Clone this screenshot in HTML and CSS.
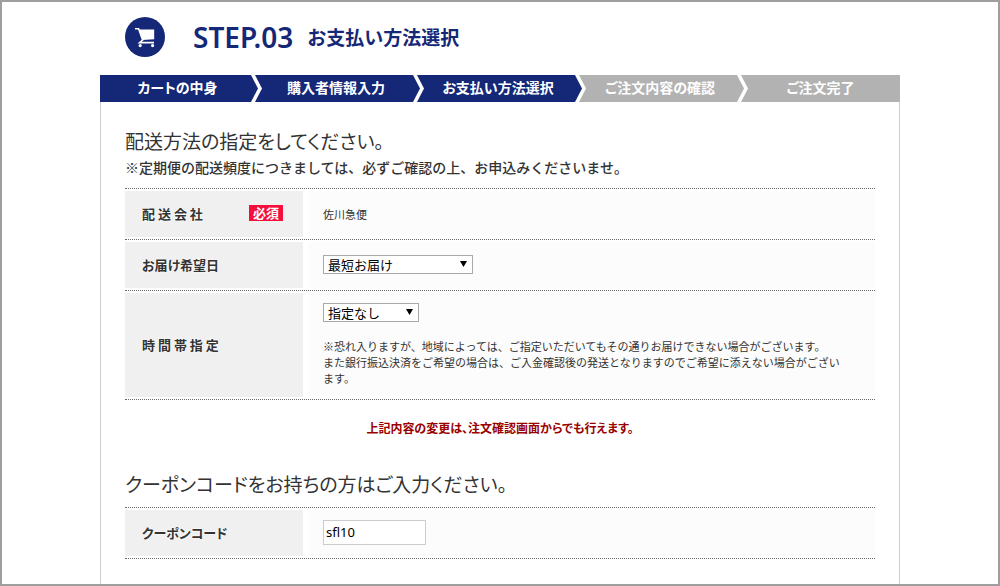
FILE: index.html
```html
<!DOCTYPE html>
<html lang="ja">
<head>
    <meta charset="UTF-8">
    <meta name="viewport" content="width=device-width, initial-scale=1.0">
    <link rel="stylesheet" href="styles.css">
    <title>お支払い方法選択</title>
</head>
<body>
    <div class="container">
        <header class="page-header">
            <svg class="cart-icon" viewBox="0 0 40 40" aria-hidden="true">
                <circle cx="20" cy="20" r="20" fill="#152777"/>
                <path d="M10 11.7h3.6l4 11.3-3 2.6H29" fill="none" stroke="#fff" stroke-width="1.6"/>
                <path d="M14 12.4H29.2V22.2L17.6 23z" fill="#fff"/>
                <circle cx="15.2" cy="28.6" r="1.6" fill="#fff"/>
                <circle cx="27.6" cy="28.6" r="1.6" fill="#fff"/>
            </svg>
            <h1><span class="step-number">STEP.03</span> <span class="step-title">お支払い方法選択</span></h1>
        </header>

        <ol class="steps">
            <li class="done">カートの中身</li>
            <li class="done">購入者情報入力</li>
            <li class="done">お支払い方法選択</li>
            <li>ご注文内容の確認</li>
            <li>ご注文完了</li>
        </ol>

        <form class="panel">
            <h2>配送方法の指定をしてください。</h2>
            <p class="lead">※定期便の配送頻度につきましては、必ずご確認の上、お申込みくださいませ。</p>
            <dl class="fields">
                <div class="field">
                    <dt>配 送 会 社 <span class="required">必須</span></dt>
                    <dd>佐川急便</dd>
                </div>
                <div class="field">
                    <dt><label for="deliveryDate">お届け希望日</label></dt>
                    <dd>
                        <div class="select-box date-box">
                            <select id="deliveryDate">
                                <option>最短お届け</option>
                            </select>
                        </div>
                    </dd>
                </div>
                <div class="field">
                    <dt><label for="deliveryTime">時 間 帯 指 定</label></dt>
                    <dd>
                        <div class="select-box time-box">
                            <select id="deliveryTime">
                                <option>指定なし</option>
                            </select>
                        </div>
                        <p class="note">※恐れ入りますが、地域によっては、ご指定いただいてもその通りお届けできない場合がございます。<br>また銀行振込決済をご希望の場合は、ご入金確認後の発送となりますのでご希望に添えない場合がございます。</p>
                    </dd>
                </div>
            </dl>
            <p class="notice">上記内容の変更は、注文確認画面からでも行えます。</p>

            <h2>クーポンコードをお持ちの方はご入力ください。</h2>
            <dl class="fields">
                <div class="field">
                    <dt><label for="couponCode">クーポンコード</label></dt>
                    <dd><input type="text" id="couponCode" class="coupon" value="sfl10"></dd>
                </div>
            </dl>
        </form>
    </div>
</body>
</html>
```

FILE: styles.css
```css
* {
    box-sizing: border-box;
}

body {
    margin: 0;
    min-height: 100vh;
    display: flex;
    border: 2px solid #9e9e9e;
    background-color: #fff;
    color: #333;
    font-family: "Noto Sans CJK JP", sans-serif;
}

.container {
    width: 100%;
    max-width: 800px;
    margin: 0 auto;
    display: flex;
    flex-direction: column;
}

h1, h2, p, dl, dd, ol {
    margin: 0;
    padding: 0;
}

.page-header {
    display: flex;
    align-items: center;
    gap: 28px;
    padding: 15px 25px 18px;
    color: #152777;
}

.cart-icon {
    width: 40px;
    height: 40px;
}

h1 {
    display: flex;
    align-items: center;
    gap: 14px;
    line-height: 40px;
}

.step-number {
    font-family: "Noto Sans", sans-serif;
    font-size: 28px;
    font-weight: 600;
}

.step-title {
    font-size: 19px;
    font-weight: 700;
}

.steps {
    display: grid;
    grid-template-columns: 155fr 162fr 162fr 162fr 159fr;
    list-style: none;
    color: #fff;
    font-size: 14px;
    font-weight: 700;
    line-height: 25px;
    text-align: center;
    font-feature-settings: "palt";
}

.steps li {
    position: relative;
    padding-bottom: 2px;
    background-color: #b2b2b2;
    white-space: nowrap;
}

.steps .done {
    background-color: #152777;
}

/* white chevron, then the step's own colour on top of it */
.steps li:not(:last-child)::before,
.steps li:not(:last-child)::after {
    content: "";
    position: absolute;
    z-index: 1;
    top: 0;
    left: calc(100% - 4px);
    width: 11px;
    height: 100%;
    background-color: #fff;
    clip-path: polygon(0 0, 4px 0, 11px 50%, 4px 100%, 0 100%);
}

.steps li:not(:last-child)::after {
    background-color: inherit;
    clip-path: polygon(0 0, 7px 50%, 0 100%);
}

.panel {
    flex: 1;
    padding: 25px 24px;
    border: solid #ccc;
    border-width: 0 1px;
}

h2 {
    margin-bottom: 1px;
    font-size: 19px;
    font-weight: 400;
    line-height: 27px;
    font-feature-settings: "palt";
}

.lead {
    margin-bottom: 9px;
    font-size: 14px;
    font-weight: 500;
    line-height: 24px;
}

.fields {
    border-bottom: 1px dotted #666;
}

.field {
    display: flex;
    gap: 5px;
    padding: 2px 0;
    border-top: 1px dotted #666;
}

dt {
    flex: none;
    width: 178px;
    min-height: 46px;
    padding: 0 20px 2px 17px;
    display: flex;
    align-items: center;
    justify-content: space-between;
    background-color: #f0f0f0;
    font-size: 13px;
    font-weight: 700;
    font-feature-settings: "palt";
    text-shadow: 0 0 2px #fff, 0 0 2px #fff;
}

dd {
    flex: 1;
    padding: 10px 26px 11px 15px;
    display: flex;
    flex-direction: column;
    justify-content: center;
    align-items: flex-start;
    background-color: #fcfcfc;
    font-size: 11px;
    line-height: 16px;
}

.required {
    padding: 0 4px;
    background-color: #f50f3c;
    color: #fff;
    line-height: 16px;
    text-shadow: none;
}

.select-box {
    position: relative;
}

.select-box::after {
    content: "";
    position: absolute;
    top: 6px;
    right: 6px;
    width: 7px;
    height: 6px;
    background-color: #000;
    clip-path: polygon(0 0, 100% 0, 50% 100%);
    pointer-events: none;
}

.date-box {
    width: 150px;
}

.time-box {
    width: 96px;
}

select {
    display: block;
    width: 100%;
    height: 19px;
    padding: 1px 4px 0;
    appearance: none;
    border: 1px solid #a9a9a9;
    border-radius: 0;
    background-color: #fff;
    color: #000;
    font-family: inherit;
    font-size: 13px;
    line-height: 16px;
}

.note {
    margin-top: 16px;
}

.notice {
    margin: 19px 0 33px;
    color: #900;
    font-size: 12px;
    font-weight: 700;
    line-height: 18px;
    text-align: center;
    font-feature-settings: "palt";
}

.notice + h2 {
    margin-bottom: 10px;
}

.coupon {
    width: 103px;
    height: 25px;
    padding: 0 2px 2px;
    border: 1px solid #ccc;
    background-color: #fff;
    color: #000;
    font-family: "Noto Sans", sans-serif;
    font-size: 13px;
}
```
